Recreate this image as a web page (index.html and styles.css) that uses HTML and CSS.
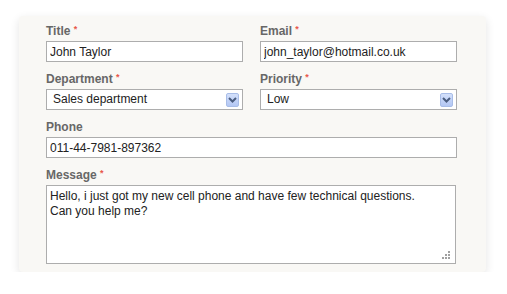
FILE: index.html
```html
<!DOCTYPE html>
<html>
<head>
<meta charset="utf-8">
<link rel="stylesheet" href="styles.css">
</head>
<body>
<form class="panel">
  <div class="grid">
    <div class="field">
      <label class="label">Title <span class="req">*</span></label>
      <input class="input" type="text" value="John Taylor">
    </div>
    <div class="field">
      <label class="label">Email <span class="req">*</span></label>
      <input class="input" type="text" value="john_taylor@hotmail.co.uk">
    </div>
    <div class="field">
      <label class="label">Department <span class="req">*</span></label>
      <div class="select">
        <span class="select-text">Sales department</span>
        <span class="select-btn"><svg width="9" height="6" viewBox="0 0 9 6"><path d="M1 1 L4.5 4.5 L8 1" fill="none" stroke="#4a5d80" stroke-width="2"/></svg></span>
      </div>
    </div>
    <div class="field">
      <label class="label">Priority <span class="req">*</span></label>
      <div class="select">
        <span class="select-text">Low</span>
        <span class="select-btn"><svg width="9" height="6" viewBox="0 0 9 6"><path d="M1 1 L4.5 4.5 L8 1" fill="none" stroke="#4a5d80" stroke-width="2"/></svg></span>
      </div>
    </div>
    <div class="field wide">
      <label class="label">Phone</label>
      <input class="input" type="text" value="011-44-7981-897362">
    </div>
    <div class="field wide">
      <label class="label">Message <span class="req">*</span></label>
      <div class="textarea">
        <div class="ta-text">Hello, i just got my new cell phone and have few technical questions.<br>Can you help me?</div>
        <svg class="grip" width="9" height="9" viewBox="0 0 9 9" fill="#a0a0a0">
          <rect x="6" y="0" width="2" height="2"/>
          <rect x="3" y="3" width="2" height="2"/>
          <rect x="6" y="3" width="2" height="2"/>
          <rect x="0" y="6" width="2" height="2"/>
          <rect x="3" y="6" width="2" height="2"/>
          <rect x="6" y="6" width="2" height="2"/>
        </svg>
      </div>
    </div>
  </div>
</form>
</body>
</html>
```

FILE: styles.css
```css
html, body {
  margin: 0;
  padding: 0;
  background: #ffffff;
}
body {
  padding: 16px 0 0 19px;
  font-family: "Liberation Sans", Arial, sans-serif;
  font-size: 12px;
}
.panel {
  width: 410px;
  padding: 8px 30px 8px 27px;
  background: #f9f8f5;
  border-radius: 4px;
  box-shadow: 0 3px 10px rgba(0, 0, 0, 0.11);
}
.grid {
  display: grid;
  grid-template-columns: 197px 197px;
  column-gap: 17px;
  row-gap: 10px;
}
.wide {
  grid-column: 1 / 3;
}
.field {
  display: flex;
  flex-direction: column;
}
.label {
  display: block;
  height: 15px;
  font-weight: bold;
  font-size: 12px;
  line-height: 15px;
  color: #676767;
  margin-bottom: 2px;
}
.req {
  color: #e8574a;
  font-size: 9px;
  line-height: 0;
  vertical-align: 3px;
  font-weight: bold;
}
.input {
  box-sizing: border-box;
  height: 21px;
  width: 100%;
  margin: 0;
  border: 1px solid #adadad;
  background: #fff;
  padding: 0 3px;
  font-family: "Liberation Sans", Arial, sans-serif;
  font-size: 12px;
  color: #222;
  outline: none;
}
.select {
  box-sizing: border-box;
  height: 21px;
  border: 1px solid #adadad;
  background: #fff;
  display: flex;
  align-items: center;
  justify-content: space-between;
  padding: 0 3px 0 6px;
  color: #222;
}
.select-text {
  line-height: 19px;
}
.select-btn {
  width: 13px;
  height: 14px;
  box-sizing: border-box;
  border: 1px solid #a8bde8;
  border-radius: 2px;
  background: linear-gradient(#d3e0fb, #b3c7f4);
  display: flex;
  align-items: center;
  justify-content: center;
}
.textarea {
  box-sizing: border-box;
  height: 79px;
  width: 410px;
  border: 1px solid #adadad;
  background: #fff;
  padding: 3px 3px 0 3px;
  color: #222;
  line-height: 15px;
  display: flex;
  flex-direction: column;
  justify-content: space-between;
}
.grip {
  align-self: flex-end;
  margin: 0 1px 3px 0;
}
```
